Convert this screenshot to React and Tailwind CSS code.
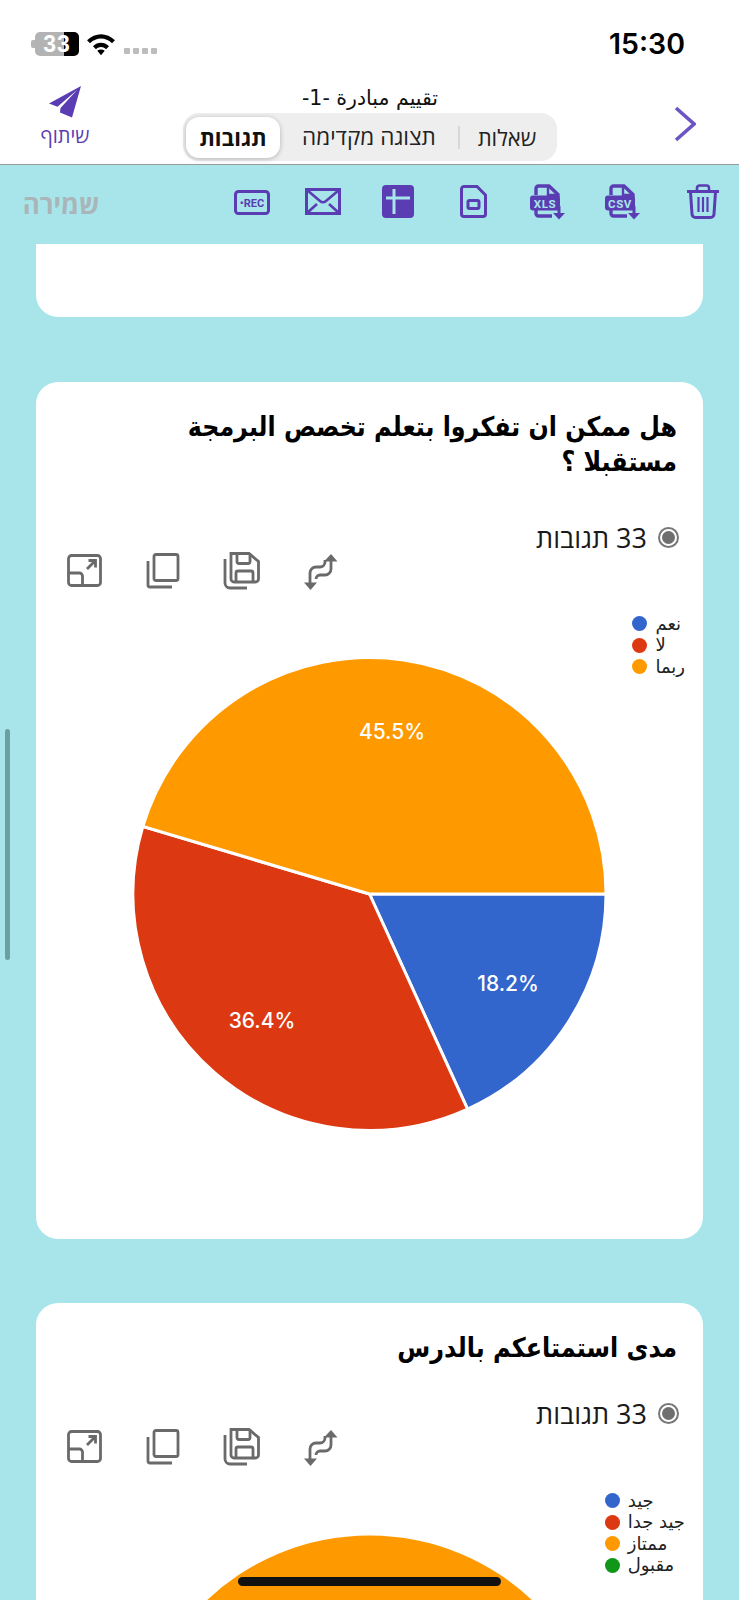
const PURPLE = "#5a3db3";
const TEAL = "#a8e5ea";
const GRAY = "#6a6a6a";
const HE = { fontFamily: '"Open Sans","Liberation Sans","DejaVu Sans",sans-serif' };

function slice(cx, cy, r, a0, a1) {
  const rad = (d) => (d * Math.PI) / 180;
  const x0 = cx + r * Math.cos(rad(a0));
  const y0 = cy + r * Math.sin(rad(a0));
  const x1 = cx + r * Math.cos(rad(a1));
  const y1 = cy + r * Math.sin(rad(a1));
  const large = a1 - a0 > 180 ? 1 : 0;
  return `M${cx} ${cy}L${x0} ${y0}A${r} ${r} 0 ${large} 1 ${x1} ${y1}Z`;
}

function FileIcon({ label }) {
  return (
    <svg width="36" height="36" viewBox="0 0 36 36" fill="none">
      <path d="M6 11V4.500A2.500 2.500 0 0 1 8.500 2H19l9 8.500V13" stroke={PURPLE} strokeWidth="3.400" />
      <path d="M18 2v9h10" stroke={PURPLE} strokeWidth="2.400" />
      <path d="M6 25v4.500A2.500 2.500 0 0 0 8.500 32H22" stroke={PURPLE} strokeWidth="3.400" />
      <rect x="0" y="11.500" width="30" height="15" rx="3" fill={PURPLE} />
      <text x="15" y="23.500" textAnchor="middle" fill={TEAL} fontSize="11.500" fontWeight="700" fontFamily="'Roboto',sans-serif" letterSpacing="0.6">{label}</text>
      <path d="M29 22v10" stroke={PURPLE} strokeWidth="3" />
      <path d="M23 29h12l-6 6.500z" fill={PURPLE} />
    </svg>
  );
}

function ActionIcons() {
  const s = { stroke: GRAY, strokeWidth: 2.8, fill: "none" };
  return (
    <div className="flex items-center pl-[31px] h-[37px]">
      <svg width="35" height="34" viewBox="0 0 35 34" {...s}>
        <rect x="1.500" y="1.500" width="32" height="30" rx="3" />
        <path d="M1.500 19h11a3 3 0 0 1 3 3v9.500" />
        <path d="M20 15l8-8M21.500 6.500H28.500V13.500" />
      </svg>
      <svg className="ml-[44px]" width="34" height="36" viewBox="0 0 34 36" {...s}>
        <rect x="8" y="1.500" width="24" height="26" rx="2" />
        <path d="M2 8v24a2 2 0 0 0 2 2h22" />
      </svg>
      <svg className="ml-[43px]" width="37" height="38" viewBox="0 0 37 38" {...s}>
        <path d="M8 1.500h18l9.500 8V27a3 3 0 0 1-3 3H11a3 3 0 0 1-3-3z" />
        <path d="M14 1.500v8a2 2 0 0 0 2 2h9a2 2 0 0 0 2-2v-8" />
        <path d="M13 30v-9a2 2 0 0 1 2-2h13a2 2 0 0 1 2 2v9" />
        <path d="M2 7v24a5 5 0 0 0 5 5h17" />
      </svg>
      <svg className="ml-[44px] mt-[3px]" width="34" height="38" viewBox="0 0 34 38" fill="none">
        <path d="M27 7v9a6 6 0 0 1-6 6h-5a4 4 0 0 0-4 4" stroke={GRAY} strokeWidth="2.800" />
        <path d="M21 7v2a5 5 0 0 1-5 5h-4a6 6 0 0 0-6 6v10" stroke={GRAY} strokeWidth="2.800" />
        <path d="M20 8.500L27 1l6.500 7.500z" fill={GRAY} />
        <path d="M0 29.500h13L6.500 37z" fill={GRAY} />
      </svg>
    </div>
  );
}

function CountRow() {
  return (
    <div className="flex items-center justify-end pr-[24px] h-[30px]">
      <span className="text-[27px] text-[#1a1a1a] leading-none" style={{ ...HE, fontWeight: 400 }} dir="rtl">33 תגובות</span>
      <span className="ml-[11px] w-[21px] h-[21px] rounded-full border-2 border-[#777] flex items-center justify-center shrink-0">
        <span className="w-[13px] h-[13px] rounded-full bg-[#6f6f6f]" />
      </span>
    </div>
  );
}

function Legend({ items, top }) {
  return (
    <div className={`absolute right-[18px] ${top} flex flex-col items-start`}>
      {items.map(([label, color]) => (
        <div key={label} className="flex items-center h-[21.500px]">
          <span className="w-[15px] h-[15px] rounded-full shrink-0" style={{ backgroundColor: color }} />
          <span className="ml-[8px] text-[18px] leading-none text-[#222]" style={{ fontFamily: '"DejaVu Sans",sans-serif' }} dir="rtl">{label}</span>
        </div>
      ))}
    </div>
  );
}

function Card2() {
  const cx = 333.5, cy = 305, r = 236.5;
  const a1 = 65.5, a2 = 196.6;
  return (
    <section className="mt-[65px] h-[857px] bg-white rounded-[22px] pt-[27px] overflow-hidden">
      <div className="flex justify-end pr-[26px]">
        <h2 className="w-[600px] shrink-0 origin-right scale-x-[0.88] text-[27px] leading-[35px] font-bold text-black text-right" style={{ fontFamily: '"DejaVu Sans",sans-serif' }} dir="rtl">هل ممكن ان تفكروا بتعلم تخصص البرمجة مستقبلا ؟</h2>
      </div>
      <div className="mt-[43px]"><CountRow /></div>
      <ActionIcons />
      <div className="relative h-[647px]">
        <Legend top="top-[24px]" items={[["نعم", "#3366cc"], ["لا", "#dc3912"], ["ربما", "#ff9900"]]} />
        <svg width="667" height="647" viewBox="0 0 667 647" className="block">
          <path d={slice(cx, cy, r, 0, a1)} fill="#3366cc" stroke="#fff" strokeWidth="3" />
          <path d={slice(cx, cy, r, a1, a2)} fill="#dc3912" stroke="#fff" strokeWidth="3" />
          <path d={slice(cx, cy, r, a2, 360)} fill="#ff9900" stroke="#fff" strokeWidth="3" />
          <g fill="#fff" fontSize="21" fontWeight="500" fontFamily="Inter,sans-serif" textAnchor="middle">
            <text x="356" y="150">45.5%</text>
            <text x="472" y="402">18.2%</text>
            <text x="226" y="439">36.4%</text>
          </g>
        </svg>
      </div>
    </section>
  );
}

function Card3() {
  return (
    <section className="mt-[64px] h-[320px] bg-white rounded-t-[22px] pt-[27px] overflow-hidden">
      <h2 className="origin-right scale-x-[0.885] text-[27px] leading-[36px] font-bold text-black text-right mr-[26px]" style={{ fontFamily: '"DejaVu Sans",sans-serif' }} dir="rtl">مدى استمتاعكم بالدرس</h2>
      <div className="mt-[32px]"><CountRow /></div>
      <ActionIcons />
      <div className="relative h-[142px]">
        <Legend top="top-[25px]" items={[["جيد", "#3366cc"], ["جيد جدا", "#dc3912"], ["ممتاز", "#ff9900"], ["مقبول", "#109618"]]} />
        <svg width="667" height="142" viewBox="0 0 667 142" className="block">
          <circle cx="333.5" cy="307" r="236.5" fill="#ff9900" />
        </svg>
      </div>
    </section>
  );
}

export default function App() {
  return (
    <div className="relative w-[739px] h-[1600px] overflow-hidden bg-[#a8e5ea]">
      <div className="bg-white h-[164px]">
        <div className="flex items-center justify-between h-[80px] pt-[8px] pl-[31px] pr-[54px]">
          <div className="flex items-center">
            <span className="w-[4px] h-[8px] bg-[#b5b5b5] rounded-l-[2px]" />
            <span className="w-[44px] h-[24px] rounded-[5px] overflow-hidden flex items-center justify-center text-white font-bold text-[23px] tracking-[1px] leading-none bg-[linear-gradient(90deg,#b3b3b3_0,#b3b3b3_66%,#000_66%,#000_100%)]" style={{ fontFamily: '"Liberation Sans",sans-serif' }}>33</span>
            <svg className="ml-[7px] -mt-[1px]" width="30" height="24" viewBox="0 0 28 22">
              <path d="M1 7.500C8.500 0 19.500 0 27 7.500l-2.700 2.800C18 4.500 10 4.500 3.700 10.300z" fill="#000" />
              <path d="M6.500 13C10.800 8.800 17.200 8.800 21.500 13l-2.800 2.800C15.800 13.200 12.200 13.200 9.300 15.800z" fill="#000" />
              <path d="M10.500 17.300c2-1.600 5-1.600 7 0L14 21.500z" fill="#000" />
            </svg>
            <div className="ml-[8px] mt-[14px] flex gap-[3.500px]">
              <span className="w-[5.500px] h-[6px] rounded-[1px] bg-[#bdbdbd]" />
              <span className="w-[5.500px] h-[6px] rounded-[1px] bg-[#bdbdbd]" />
              <span className="w-[5.500px] h-[6px] rounded-[1px] bg-[#bdbdbd]" />
              <span className="w-[5.500px] h-[6px] rounded-[1px] bg-[#bdbdbd]" />
            </div>
          </div>
          <span className="text-[28.500px] font-semibold leading-none text-black" style={{ fontFamily: 'Inter,sans-serif' }}>15:30</span>
        </div>
        <div className="flex h-[84px] pl-[40px]">
          <div className="w-[50px] flex flex-col items-center pt-[6px]">
            <svg width="33" height="32" viewBox="0 0 33 32">
              <path d="M32 0L0 17.500l8.500 3.300L28 4 11.500 22l-.500 4.500 12 5z" fill={PURPLE} />
            </svg>
            <span className="text-[20px] leading-[24px] mt-[6px]" style={{ ...HE, color: PURPLE }} dir="rtl">שיתוף</span>
          </div>
          <div className="ml-[93px] w-[374px] flex flex-col items-center">
            <div className="h-[33px] pt-[5px] text-[20.500px] leading-[26px] text-[#111]" style={{ fontFamily: '"DejaVu Sans",sans-serif' }} dir="rtl">تقييم مبادرة -1-</div>
            <div className="w-full h-[48px] bg-[#eeeeee] rounded-[16px] flex items-center p-[3px]" style={HE}>
              <div className="w-[94px] h-[41px] bg-white rounded-[13px] shadow-[0_1px_5px_rgba(0,0,0,0.25)] flex items-center justify-center text-[22px] font-bold text-[#111]" dir="rtl">תגובות</div>
              <div className="w-[178px] text-center text-[22.500px] text-[#222]" dir="rtl">תצוגה מקדימה</div>
              <span className="w-[2px] h-[23px] bg-[#d8d8d8]" />
              <div className="flex-1 text-center text-[22px] text-[#222]" dir="rtl">שאלות</div>
            </div>
          </div>
          <svg className="ml-[117px] mt-[26px]" width="22" height="36" viewBox="0 0 22 36" fill="none">
            <path d="M2 2l18 16L2 34" stroke="#6b55c2" strokeWidth="3.600" />
          </svg>
        </div>
      </div>
      <div className="h-[1px] bg-[#9a9a9a]" />

      <div className="flex items-center h-[79px] pb-[6px] pl-[21px]">
        <span className="w-[80px] mt-[6px] text-[26px] font-bold text-[#a9b5b8] text-center" style={HE} dir="rtl">שמירה</span>
        <svg className="ml-[133px] mt-[2px]" width="36" height="25" viewBox="0 0 36 25" fill="none">
          <rect x="1.500" y="1.500" width="33" height="22" rx="3" stroke={PURPLE} strokeWidth="3" />
          <text x="18" y="16.500" textAnchor="middle" fill={PURPLE} fontSize="11" fontWeight="700" fontFamily="'Roboto',sans-serif">•REC</text>
        </svg>
        <svg className="ml-[35px]" width="36" height="27" viewBox="0 0 36 27" fill="none" stroke={PURPLE} strokeWidth="3">
          <rect x="1.500" y="1.500" width="33" height="24" />
          <path d="M2 2l13 11q3 2.500 6 0L34 2M2 25l10-9M34 25l-10-9" strokeWidth="2.600" />
        </svg>
        <svg className="ml-[41px]" width="32" height="33" viewBox="0 0 32 33">
          <rect width="32" height="33" rx="4" fill={PURPLE} />
          <path d="M12 4v25M4 13h24" stroke={TEAL} strokeWidth="3" />
        </svg>
        <svg className="ml-[46px]" width="27" height="33" viewBox="0 0 27 33" fill="none" stroke={PURPLE} strokeWidth="3">
          <path d="M1.500 4a2.500 2.500 0 0 1 2.500-2.500h13L25.500 10v19a2.500 2.500 0 0 1-2.500 2.500H4A2.500 2.500 0 0 1 1.500 29z" />
          <path d="M17 2l8 8" strokeWidth="1.500" />
          <rect x="8" y="15.500" width="11" height="8" rx="1.500" />
        </svg>
        <div className="ml-[43px] w-[36px]"><FileIcon label="XLS" /></div>
        <div className="ml-[39px] w-[36px]"><FileIcon label="CSV" /></div>
        <svg className="ml-[45px]" width="34" height="35" viewBox="0 0 34 35" fill="none" stroke={PURPLE} strokeWidth="3">
          <path d="M1 7.500h32" />
          <path d="M11 7V4a2.500 2.500 0 0 1 2.500-2.500h7A2.500 2.500 0 0 1 23 4v3" strokeWidth="2.600" />
          <path d="M4.500 8l1.500 22a3.500 3.500 0 0 0 3.500 3.500h15A3.500 3.500 0 0 0 28 30L29.500 8" />
          <path d="M12.500 13v15M17 13v15M21.500 13v15" strokeWidth="2.200" />
        </svg>
      </div>

      <div className="px-[36px]">
        <div className="h-[73px] bg-white rounded-b-[22px]" />
        <Card2 />
        <Card3 />
      </div>

      <div className="absolute left-[5px] top-[729px] w-[5px] h-[231px] rounded-full bg-[#6ba0a3]" />
      <div className="absolute left-[238px] top-[1577px] w-[263px] h-[9px] rounded-full bg-[#121212]" />
    </div>
  );
}
